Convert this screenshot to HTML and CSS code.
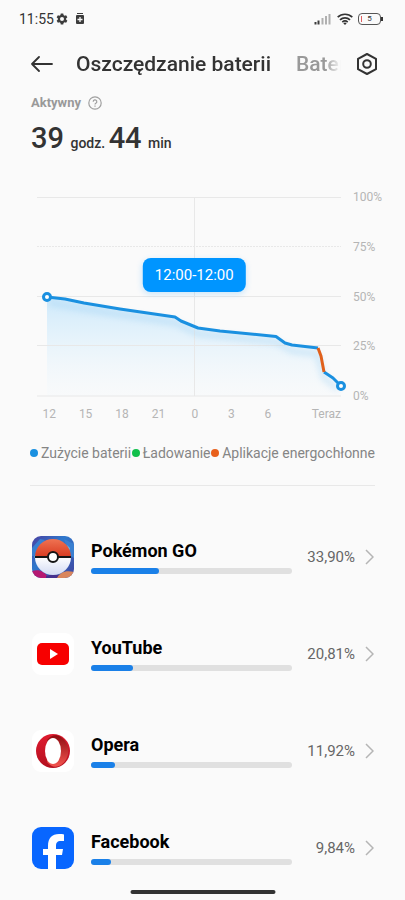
FILE: index.html
```html
<!DOCTYPE html>
<html lang="pl">
<head>
    <meta charset="UTF-8">
    <meta name="viewport" content="width=device-width, initial-scale=1.0">
    <title>Oszczędzanie baterii</title>
    <link rel="stylesheet" href="styles.css">
</head>
<body>
    <div class="status-bar">
        <span class="clock">11:55</span>
        <svg class="status-gear" width="12" height="12" viewBox="0 0 24 24" fill="#3c3c3c">
            <path fill-rule="evenodd" d="M9.5 1h5l.6 3.2 2 1.2 3.1-1.1 2.5 4.3-2.5 2.2v2.4l2.5 2.2-2.5 4.3-3.1-1.1-2 1.2-.6 3.2h-5l-.6-3.2-2-1.2-3.1 1.1-2.5-4.3 2.5-2.2v-2.4L1.300 8.600l2.500-4.300 3.100 1.100 2-1.200zM12 8a4 4 0 1 0 0 8 4 4 0 0 0 0-8z"/>
        </svg>
        <svg class="status-saver" width="10" height="12" viewBox="0 0 10 12">
            <rect x="2" y="0" width="6" height="1" fill="#3c3c3c"/>
            <rect x="1" y="2" width="8" height="9" rx="1" fill="#3c3c3c"/>
            <path d="M5 4v5M2.500 6.500h5" stroke="#fafafa" stroke-width="1.300"/>
        </svg>
        <div class="status-right">
            <svg width="18" height="12" viewBox="0 0 18 12">
                <path d="M1.500 9v2.500M4.500 7.500v4" stroke="#3c3c3c" stroke-width="2"/>
                <path d="M8.500 5v6.500M12 3v8.500M15.500 1v10.500" stroke="#b0b0b0" stroke-width="2"/>
            </svg>
            <svg width="16" height="12" viewBox="0 0 16 12" fill="none" stroke="#333" stroke-width="1.700">
                <path d="M.7 4.200a10.500 10.500 0 0 1 14.600 0M3 6.800a7.200 7.200 0 0 1 10 0M5.300 9.200a4 4 0 0 1 5.400 0"/>
                <path d="M6.300 10.200L8 12l1.700-1.800a2.500 2.500 0 0 0-3.400 0z" fill="#333" stroke="none"/>
            </svg>
            <div class="battery">5</div>
        </div>
    </div>

    <header class="header">
        <button class="icon-button" aria-label="Wstecz">
            <svg width="22" height="16" viewBox="0 0 22 16" fill="none" stroke="#333" stroke-width="1.800" stroke-linecap="round" stroke-linejoin="round">
                <path d="M21 8H1M8 1L1 8l7 7"/>
            </svg>
        </button>
        <nav class="tabs">
            <a href="#" class="tab active">Oszczędzanie baterii</a>
            <a href="#" class="tab">Bateria</a>
        </nav>
        <button class="icon-button" aria-label="Ustawienia">
            <svg width="22" height="22" viewBox="0 0 22 22" fill="none" stroke="#333" stroke-width="2" stroke-linejoin="round">
                <path d="M11 1l9 4.800v10.400L11 21l-9-4.800V5.800z"/>
                <circle cx="11" cy="11" r="3.800"/>
            </svg>
        </button>
    </header>

    <main>
        <section class="summary">
            <div class="summary-label">
                Aktywny
                <svg width="14" height="14" viewBox="0 0 14 14" fill="none" stroke="#a0a0a0" stroke-width="1.200">
                    <circle cx="7" cy="7" r="6.200"/>
                    <path d="M5.200 5.700a1.800 1.800 0 1 1 2.700 1.500c-.6.4-.9.600-.9 1.300"/>
                    <path d="M7 9.500v1.200"/>
                </svg>
            </div>
            <div class="summary-time"><span class="number">39</span> godz. <span class="number">44</span> min</div>
        </section>

        <section class="chart">
            <div class="plot">
                <svg viewBox="0 0 310 199" fill="none">
                    <defs>
                        <linearGradient id="area" x1="0" y1="0" x2="0" y2="1">
                            <stop offset="0" stop-color="#cde9fb"/>
                            <stop offset="1" stop-color="#f4f9fc" stop-opacity=".3"/>
                        </linearGradient>
                        <filter id="glow" x="-10%" y="-20%" width="120%" height="150%">
                            <feGaussianBlur stdDeviation="3"/>
                        </filter>
                    </defs>
                    <path d="M16 100L34 102 53 106 89 112 144 120 150 124 167 131 189 134 245 139 254 146 261 148 287 151 290 159 293 175 302 181 310 189V199H16z" fill="url(#area)"/>
                    <path class="grid" d="M6 .5H310M6 99.500H310M6 148.500H310M6 199H310M163.500 0V199"/>
                    <path class="grid" d="M6 49.500H310" stroke-dasharray="2 1"/>
                    <path d="M18 106L53 112 144 126 167 137 245 145 261 154 286 157 293 181 307 192" stroke="#8cc8f0" stroke-width="5" opacity=".35" filter="url(#glow)"/>
                    <path class="line" d="M16 100L34 102 53 106 89 112 144 120 150 124 167 131 189 134 245 139.500 254 146 261 148 287 151"/>
                    <path class="line" d="M293 175L302 181 310 189"/>
                    <path class="line heavy" d="M287 151L290 159 293 175"/>
                    <circle class="dot" cx="16" cy="100" r="3.500"/>
                    <circle class="dot" cx="310" cy="189" r="3.500"/>
                </svg>
                <div class="tooltip">12:00-12:00</div>
            </div>
            <div class="y-axis">
                <span>100%</span>
                <span>75%</span>
                <span>50%</span>
                <span>25%</span>
                <span>0%</span>
            </div>
            <div class="x-axis">
                <span>12</span>
                <span>15</span>
                <span>18</span>
                <span>21</span>
                <span>0</span>
                <span>3</span>
                <span>6</span>
                <span class="now">Teraz</span>
            </div>
        </section>

        <div class="legend">
            <span class="usage">Zużycie baterii</span>
            <span class="charging">Ładowanie</span>
            <span class="hungry">Aplikacje energochłonne</span>
        </div>

        <section class="apps">
            <a href="#" class="app">
                <svg class="app-icon" viewBox="0 0 42 42">
                    <defs>
                        <clipPath id="tile"><rect width="42" height="42" rx="9"/></clipPath>
                        <linearGradient id="sky" x1="0" y1="0" x2="1" y2="1">
                            <stop offset="0" stop-color="#4a3fa0"/>
                            <stop offset=".4" stop-color="#2f78cc"/>
                            <stop offset="1" stop-color="#41459f"/>
                        </linearGradient>
                        <linearGradient id="ballTop" x1="0" y1="0" x2="0" y2="1">
                            <stop offset="0" stop-color="#ef7352"/>
                            <stop offset="1" stop-color="#d83a20"/>
                        </linearGradient>
                        <linearGradient id="ballBottom" x1="0" y1="0" x2="0" y2="1">
                            <stop offset="0" stop-color="#fff"/>
                            <stop offset="1" stop-color="#d3daf3"/>
                        </linearGradient>
                    </defs>
                    <g clip-path="url(#tile)">
                        <rect width="42" height="42" fill="url(#sky)"/>
                        <path d="M0 12l8-9 5 1L3 20H0zM32 3l10 5v14l-5-3z" fill="#397fd0"/>
                        <path d="M35 9l3 3-1 4zM2 21l3-4v7z" fill="#63b8e8"/>
                        <path d="M0 35c7-2 12 0 17 7H0z" fill="#b51972"/>
                        <path d="M14 40c9-3 16-1 20 2H14z" fill="#46318e"/>
                        <path d="M25 42c3-6 9-8 17-6v6z" fill="#d9855c"/>
                        <path d="M3 21a18 18 0 0 1 36 0z" fill="url(#ballTop)"/>
                        <path d="M3 21a18 18 0 0 0 36 0z" fill="url(#ballBottom)"/>
                        <path d="M3 21h36" stroke="#151515" stroke-width="2"/>
                        <circle cx="21" cy="21" r="5" fill="#fff" stroke="#151515" stroke-width="2"/>
                    </g>
                </svg>
                <div class="app-info">
                    <div class="app-name">Pokémon GO</div>
                    <div class="bar"><div class="fill" style="width: 33.9%"></div></div>
                </div>
                <span class="percent">33,90%</span>
                <svg class="chevron" viewBox="0 0 9 16"><path d="M1 1l7 7-7 7"/></svg>
            </a>

            <a href="#" class="app">
                <svg class="app-icon" viewBox="0 0 42 42">
                    <rect width="42" height="42" rx="9" fill="#fff"/>
                    <rect x="5" y="10" width="32" height="22" rx="5" fill="#f70000"/>
                    <path d="M18 16v10l8-5z" fill="#fff"/>
                </svg>
                <div class="app-info">
                    <div class="app-name">YouTube</div>
                    <div class="bar"><div class="fill" style="width: 20.81%"></div></div>
                </div>
                <span class="percent">20,81%</span>
                <svg class="chevron" viewBox="0 0 9 16"><path d="M1 1l7 7-7 7"/></svg>
            </a>

            <a href="#" class="app">
                <svg class="app-icon" viewBox="0 0 42 42">
                    <defs>
                        <linearGradient id="operaLeft" x1="0" y1="0" x2="0" y2="1">
                            <stop offset="0" stop-color="#e01b30"/>
                            <stop offset="1" stop-color="#b3101f"/>
                        </linearGradient>
                        <linearGradient id="operaRight" x1="0" y1="0" x2="0" y2="1">
                            <stop offset="0" stop-color="#8f0d12"/>
                            <stop offset="1" stop-color="#f4554f"/>
                        </linearGradient>
                    </defs>
                    <rect width="42" height="42" rx="9" fill="#fff"/>
                    <circle cx="21" cy="21" r="17" fill="url(#operaLeft)"/>
                    <path d="M15 10c4-5 9-6 14-3a17 17 0 0 1 0 28c-5 3-10 2-14-3z" fill="url(#operaRight)"/>
                    <ellipse cx="21" cy="21" rx="8" ry="13" fill="#fff"/>
                </svg>
                <div class="app-info">
                    <div class="app-name">Opera</div>
                    <div class="bar"><div class="fill" style="width: 11.92%"></div></div>
                </div>
                <span class="percent">11,92%</span>
                <svg class="chevron" viewBox="0 0 9 16"><path d="M1 1l7 7-7 7"/></svg>
            </a>

            <a href="#" class="app">
                <svg class="app-icon" viewBox="0 0 42 42">
                    <rect width="42" height="42" rx="9" fill="#0866ff"/>
                    <path d="M16 42V28h-5v-6h5v-3c0-8 4-12 11-12 2 0 4 0 5 .5V14h-3c-4 0-5 2-5 5v3h7l-1 6h-6v14z" fill="#fff"/>
                </svg>
                <div class="app-info">
                    <div class="app-name">Facebook</div>
                    <div class="bar"><div class="fill" style="width: 9.84%"></div></div>
                </div>
                <span class="percent">9,84%</span>
                <svg class="chevron" viewBox="0 0 9 16"><path d="M1 1l7 7-7 7"/></svg>
            </a>
        </section>
    </main>

    <div class="home-indicator"></div>
</body>
</html>
```

FILE: styles.css
```css
* {
    box-sizing: border-box;
}

body {
    margin: 0;
    background: #fafafa;
    color: #333;
    font-family: Roboto, "Liberation Sans", sans-serif;
}

svg {
    display: block;
}

a {
    color: inherit;
    text-decoration: none;
}

/* status bar */
.status-bar {
    display: flex;
    align-items: center;
    height: 38px;
    padding: 0 24px 0 19px;
}

.clock {
    font-size: 14px;
    line-height: 16px;
}

.status-gear {
    margin-left: 2px;
}

.status-saver {
    margin-left: 7px;
}

.status-right {
    display: flex;
    align-items: center;
    gap: 5px;
    margin-left: auto;
}

.battery {
    position: relative;
    width: 23px;
    height: 12px;
    border: 1px solid #555;
    border-radius: 4px;
    font-size: 8px;
    line-height: 10px;
    text-align: center;
}

.battery::before {
    content: "";
    position: absolute;
    left: 2px;
    top: 2px;
    width: 1px;
    height: 6px;
    background: #e06060;
}

.battery::after {
    content: "";
    position: absolute;
    right: -3px;
    top: 3px;
    width: 2px;
    height: 4px;
    background: #333;
}

/* header */
.header {
    display: flex;
    align-items: center;
    height: 52px;
    padding: 0 27px 0 31px;
}

.icon-button {
    padding: 0;
    border: none;
    background: none;
    cursor: pointer;
}

.tabs {
    display: flex;
    flex: 1;
    gap: 25px;
    min-width: 0;
    margin: 0 15px 0 23px;
    overflow: hidden;
    white-space: nowrap;
    -webkit-mask-image: linear-gradient(to left, transparent, #000 16px);
    mask-image: linear-gradient(to left, transparent, #000 16px);
}

.tab {
    color: #999;
    font-size: 21px;
    font-weight: 500;
    line-height: 28px;
}

.tab.active {
    color: #333;
}

/* summary */
.summary {
    padding: 5px 31px 0;
}

.summary-label {
    display: flex;
    align-items: center;
    gap: 7px;
    color: #999;
    font-size: 13px;
    font-weight: 700;
    line-height: 16px;
}

.summary-time {
    margin-top: 9px;
    font-size: 14px;
    font-weight: 500;
    line-height: 36px;
}

.number {
    margin-right: 3px;
    font-size: 29px;
}

/* chart */
.chart {
    display: grid;
    grid-template-columns: 1fr 29px;
    column-gap: 12px;
    padding: 28px 23px 0 31px;
    color: #b5b5b5;
    font-size: 12px;
    line-height: 16px;
}

.plot {
    position: relative;
    padding: 8px 0;
}

.plot svg {
    width: 100%;
    overflow: visible;
}

.grid {
    stroke: #e8e8e8;
}

.line {
    stroke: #1a90e0;
    stroke-width: 3;
    stroke-linejoin: round;
}

.line.heavy {
    stroke: #e0601c;
}

.dot {
    fill: #fff;
    stroke: #1a90e0;
    stroke-width: 3;
}

.tooltip {
    position: absolute;
    top: 69px;
    left: 50%;
    padding: 0 12px;
    border-radius: 8px;
    background: #0095ff;
    box-shadow: 0 2px 6px rgba(0, 149, 255, 0.2);
    color: #fff;
    font-size: 15px;
    line-height: 34px;
    white-space: nowrap;
    transform: translateX(-42%);
}

.y-axis {
    display: flex;
    flex-direction: column;
    justify-content: space-between;
}

.x-axis {
    display: grid;
    grid-template-columns: repeat(7, 1fr) 55px;
    margin-top: 2px;
    text-align: center;
}

.now {
    text-align: right;
}

/* legend */
.legend {
    display: flex;
    justify-content: space-between;
    margin: 0 30px;
    padding: 21px 0 22px;
    border-bottom: 1px solid #e8e8e8;
    color: #858585;
    font-size: 14px;
    line-height: 20px;
    white-space: nowrap;
}

.legend span {
    display: flex;
    align-items: center;
    gap: 3px;
}

.legend span::before {
    content: "";
    width: 8px;
    height: 8px;
    border-radius: 50%;
    background: #1a90e0;
}

.legend .charging::before {
    background: #10c04c;
}

.legend .hungry::before {
    background: #e8601c;
}

/* apps */
.apps {
    padding: 22px 31px 0 32px;
}

.app {
    display: flex;
    align-items: center;
    height: 97px;
}

.app-icon {
    flex: none;
    width: 42px;
    height: 42px;
}

.app-info {
    flex: 1;
    margin-left: 17px;
}

.app-name {
    color: #000;
    font-size: 18px;
    font-weight: 700;
    line-height: 24px;
}

.bar {
    height: 6px;
    margin-top: 5px;
    border-radius: 3px;
    background: #e0e0e0;
}

.fill {
    height: 6px;
    border-radius: 3px;
    background: #1a80e8;
}

.percent {
    width: 63px;
    color: #666;
    font-size: 15px;
    line-height: 20px;
    text-align: right;
}

.chevron {
    width: 9px;
    height: 16px;
    margin-left: 10px;
    fill: none;
    stroke: #b5b5b5;
    stroke-width: 1.5px;
}

.home-indicator {
    position: fixed;
    bottom: 6px;
    left: 50%;
    width: 145px;
    height: 4px;
    border-radius: 2px;
    background: #333;
    transform: translateX(-50%);
}
```
